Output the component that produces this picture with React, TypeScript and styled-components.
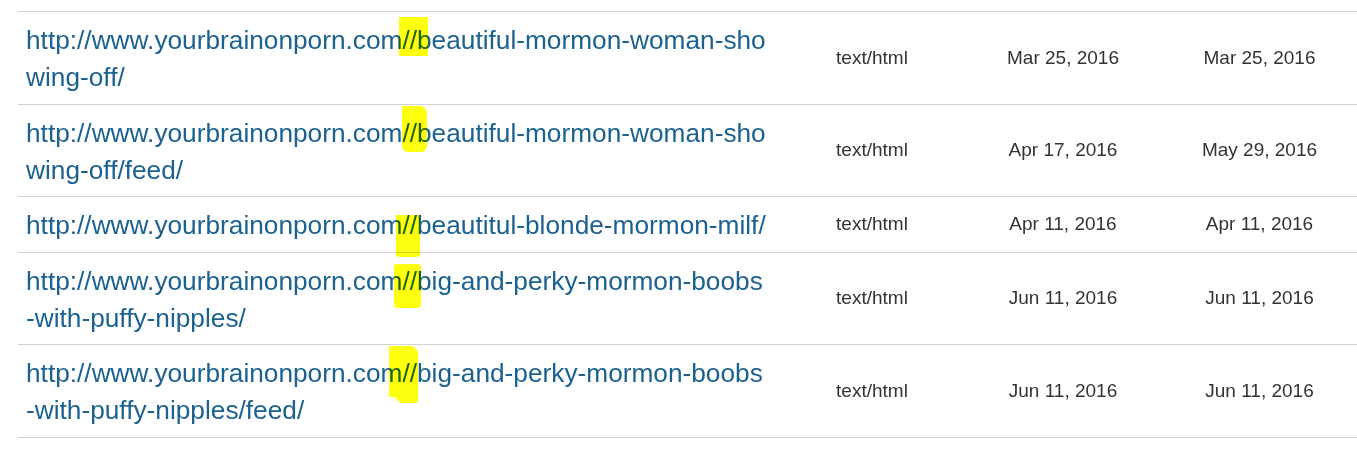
import styled, { createGlobalStyle } from "styled-components";

const GlobalStyle = createGlobalStyle`
  body {
    margin: 0;
    background: #fff;
    font-family: "Liberation Sans", Arial, sans-serif;
  }
`;

const Table = styled.div`
  margin: 11px 0 0 18px;
  width: 1339px;
  border-top: 1px solid #d2d2d2;
`;

const Row = styled.div`
  display: grid;
  grid-template-columns: 762px 184px 198px 195px;
  align-items: center;
  border-bottom: 1px solid #d2d2d2;
`;

const UrlCell = styled.div`
  position: relative;
  padding: 10px 0 7.5px 8px;
  font-size: 26.25px;
  line-height: 37px;
  color: #1b6290;
`;

const UrlLine = styled.div`
  white-space: nowrap;
  position: relative;
  z-index: 1;
`;

const Cell = styled.div`
  text-align: center;
  font-size: 19px;
  color: #333;
`;

type Mark = {
  left: number;
  top: number;
  w: number;
  h: number;
  radius?: string;
  clip?: string;
};

const Highlight = styled.span<{ $m: Mark }>`
  position: absolute;
  z-index: 2;
  left: ${(p) => p.$m.left}px;
  top: ${(p) => p.$m.top}px;
  width: ${(p) => p.$m.w}px;
  height: ${(p) => p.$m.h}px;
  background: #ffff10;
  mix-blend-mode: multiply;
  border-radius: ${(p) => p.$m.radius || "0"};
  clip-path: ${(p) => p.$m.clip || "none"};
`;

const rows: {
  lines: string[];
  type: string;
  first: string;
  last: string;
  mark: Mark;
}[] = [
  {
    lines: ["http://www.yourbrainonporn.com//beautiful-mormon-woman-sho", "wing-off/"],
    type: "text/html",
    first: "Mar 25, 2016",
    last: "Mar 25, 2016",
    mark: { left: 381, top: 5, w: 29, h: 39 },
  },
  {
    lines: ["http://www.yourbrainonporn.com//beautiful-mormon-woman-sho", "wing-off/feed/"],
    type: "text/html",
    first: "Apr 17, 2016",
    last: "May 29, 2016",
    mark: { left: 384, top: 1, w: 25, h: 46, radius: "2px 7px 6px 6px" },
  },
  {
    lines: ["http://www.yourbrainonporn.com//beautitul-blonde-mormon-milf/"],
    type: "text/html",
    first: "Apr 11, 2016",
    last: "Apr 11, 2016",
    mark: { left: 378, top: 18, w: 24, h: 42, radius: "0 0 3px 3px" },
  },
  {
    lines: ["http://www.yourbrainonporn.com//big-and-perky-mormon-boobs", "-with-puffy-nipples/"],
    type: "text/html",
    first: "Jun 11, 2016",
    last: "Jun 11, 2016",
    mark: { left: 376, top: 11, w: 27, h: 44, radius: "3px 3px 4px 4px" },
  },
  {
    lines: ["http://www.yourbrainonporn.com//big-and-perky-mormon-boobs", "-with-puffy-nipples/feed/"],
    type: "text/html",
    first: "Jun 11, 2016",
    last: "Jun 11, 2016",
    mark: {
      left: 371,
      top: 1,
      w: 29,
      h: 57,
      radius: "1px 8px 3px 0",
      clip: "polygon(0 0, 100% 0, 100% 100%, 40% 100%, 22% 91%, 0 88%)",
    },
  },
];

export default function App() {
  return (
    <>
      <GlobalStyle />
      <Table>
        {rows.map((r, i) => (
          <Row key={i}>
            <UrlCell>
              {r.lines.map((l, j) => (
                <UrlLine key={j}>{l}</UrlLine>
              ))}
              <Highlight $m={r.mark} />
            </UrlCell>
            <Cell>{r.type}</Cell>
            <Cell>{r.first}</Cell>
            <Cell>{r.last}</Cell>
          </Row>
        ))}
      </Table>
    </>
  );
}
